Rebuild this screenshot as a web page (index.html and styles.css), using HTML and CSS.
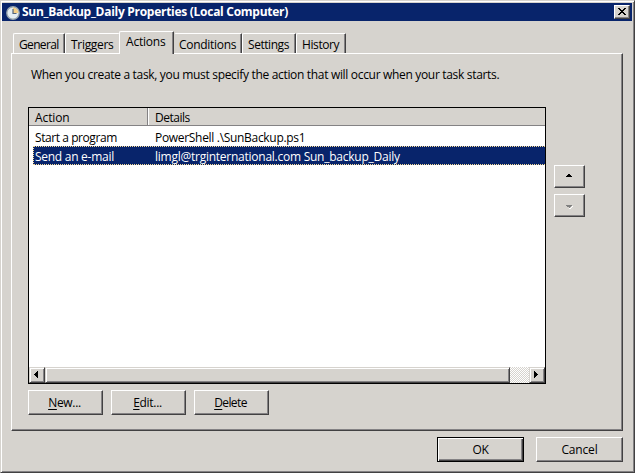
FILE: index.html
```html
<!DOCTYPE html>
<html lang="en">
<head>
<meta charset="utf-8">
<title>Sun_Backup_Daily Properties (Local Computer)</title>
<link rel="stylesheet" href="styles.css">
</head>
<body>
<main class="window">
  <header class="titlebar">
    <svg class="clock" width="14" height="14" viewBox="0 0 14 14">
      <circle cx="7" cy="7" r="6.2" fill="#e4edf2" stroke="#98a4ac" stroke-width="1.4"/>
      <path d="M7 7V1.6A5.4 5.4 0 0 1 12.4 7Z" fill="#f3ce86"/>
      <path d="M7 3v4.5h3.5" fill="none" stroke="#53657c" stroke-width="1.2"/>
    </svg>
    <h1 class="title"><span class="t-title">Sun_Backup_Daily Properties (Local Computer)</span></h1>
    <button class="close" aria-label="Close">
      <svg width="8" height="7" viewBox="0 0 8 7" shape-rendering="crispEdges"><path d="M0 0h2v1h1v1h2V1h1V0h2v1H7v1H6v1H5v1h1v1h1v1h1v1H6V6H5V5H3v1H2v1H0V6h1V5h1V4h1V3H2V2H1V1H0z"/></svg>
    </button>
  </header>
  <nav class="tabs">
    <div class="tab general"><span class="t-general">General</span></div>
    <div class="tab triggers"><span class="t-triggers">Triggers</span></div>
    <div class="tab actions active"><span class="t-actions">Actions</span></div>
    <div class="tab conditions"><span class="t-conditions">Conditions</span></div>
    <div class="tab settings"><span class="t-settings">Settings</span></div>
    <div class="tab history"><span class="t-history">History</span></div>
  </nav>
  <section class="panel">
    <p class="intro"><span class="t-intro">When you create a task, you must specify the action that will occur when your task starts.</span></p>
    <div class="content">
      <div class="list">
        <div class="head">
          <div class="th first"><span class="t-action">Action</span></div>
          <div class="th"><span class="t-details">Details</span></div>
        </div>
        <div class="row">
          <div class="cell first"><span class="t-start">Start a program</span></div>
          <div class="cell"><span class="t-power">PowerShell .\SunBackup.ps1</span></div>
        </div>
        <div class="row selected">
          <div class="cell first"><span class="t-send">Send an e-mail</span></div>
          <div class="cell"><span class="t-mail">limgl@trginternational.com Sun_backup_Daily</span></div>
        </div>
        <div class="space"></div>
        <div class="scrollbar">
          <div class="sb-btn"><svg width="4" height="7" viewBox="0 0 4 7" shape-rendering="crispEdges"><path d="M3 0h1v7H3V6H2V5H1V4H0V3h1V2h1V1h1z"/></svg></div>
          <div class="thumb"></div>
          <div class="track"></div>
          <div class="sb-btn"><svg width="4" height="7" viewBox="0 0 4 7" shape-rendering="crispEdges"><path d="M0 0h1v1h1v1h1v1h1v1H3v1H2v1H1v1H0z"/></svg></div>
        </div>
      </div>
      <div class="order">
        <button class="btn arrow" aria-label="Move up"><svg width="8" height="4" viewBox="0 0 8 4" shape-rendering="crispEdges"><path d="M2 0h2v1h1v1h1v1H0V2h1V1h1z"/></svg></button>
        <button class="btn arrow down" aria-label="Move down"><svg width="8" height="4" viewBox="0 0 8 4" shape-rendering="crispEdges"><path d="M6 1h1v1H6v1H5v1H3V3h2V2h1z" fill="#fff"/><path d="M0 0h6v1H5v1H4v1H3V2H1V1H0z" fill="#808080"/></svg></button>
      </div>
    </div>
    <div class="buttons">
      <button class="btn"><span class="t-new"><u>N</u>ew...</span></button>
      <button class="btn"><span class="t-edit"><u>E</u>dit...</span></button>
      <button class="btn"><span class="t-delete"><u>D</u>elete</span></button>
    </div>
  </section>
  <footer class="footer">
    <button class="btn ok"><span class="t-ok">OK</span></button>
    <button class="btn"><span class="t-cancel">Cancel</span></button>
  </footer>
</main>
</body>
</html>
```
FILE: styles.css
```css
* { box-sizing: border-box; }
body {
  margin: 0;
  background: #d6d3ce;
  color: #000;
  font: 12px/16px "Open Sans", "Noto Sans", sans-serif;
}
svg { display: block; flex: none; }
span { white-space: nowrap; }
button { font: inherit; color: inherit; margin: 0; padding: 0; }
.window {
  width: 635px;
  height: 473px;
  overflow: hidden;
  display: flex;
  flex-direction: column;
  border: 1px solid #424142;
  border-top-color: #d6d3ce;
  border-left-color: #d6d3ce;
  box-shadow: inset 1px 1px #fff, inset -1px -1px #848284;
  padding: 2px 2px 1px 1px;
}
.titlebar {
  height: 18px;
  flex: none;
  display: flex;
  align-items: center;
  background: #08246b;
  color: #fff;
  padding: 0 2px 0 4px;
}
.clock { margin-top: 2px; }
.title { margin: 0 auto 0 2px; font-size: 12px; line-height: 18px; font-weight: 700; }
.close {
  width: 16px;
  height: 14px;
  display: flex;
  padding: 2px 0 0 3px;
  background: #d6d3ce;
  border: 1px solid #424142;
  border-top-color: #fff;
  border-left-color: #fff;
  box-shadow: inset -1px -1px #848284;
}
.tabs {
  height: 32px;
  flex: none;
  display: flex;
  align-items: flex-end;
  padding-left: 11px;
}
.tab {
  height: 20px;
  display: flex;
  align-items: flex-start;
  border: 1px solid #424142;
  border-top-color: #fff;
  border-left-color: #fff;
  border-bottom: 0;
  border-radius: 2px 1px 0 0;
  box-shadow: inset -1px 0 #848284;
  padding: 3px 0 0 5px;
}
.general { width: 52px; }
.triggers { width: 54px; border-right: 0; box-shadow: none; }
.actions { width: 55px; }
.conditions { width: 68px; padding-left: 4px; border-left-color: #d6d3ce; }
.settings { width: 54px; }
.history { width: 50px; }
.active {
  height: 23px;
  margin-bottom: -1px;
  padding: 2px 0 0 6px;
  position: relative;
  background: #d6d3ce;
}
.panel {
  width: 612px;
  height: 378px;
  flex: none;
  margin-left: 9px;
  padding: 13px 0 0 16px;
  border: 1px solid #424142;
  border-top-color: #fff;
  border-left-color: #fff;
  box-shadow: inset -1px -1px #848284;
}
.intro { margin: 0 0 24px; padding-left: 3px; height: 16px; }
.content { display: flex; gap: 8px; height: 277px; }
.list {
  width: 518px;
  display: flex;
  flex-direction: column;
  border: 1px solid #000;
  background: #fff;
}
.head { display: flex; height: 18px; background: #d6d3ce; border-bottom: 1px solid #848284; }
.th { flex: 1; padding-left: 6px; line-height: 20px; }
.th.first { flex: none; width: 120px; border-right: 1px solid #fff; box-shadow: inset -1px 0 #848284; }
.row { height: 19px; margin: 1px 0 0 4px; display: flex; line-height: 21px; }
.cell { padding-left: 6px; }
.cell.first { width: 116px; padding-left: 2px; }
.row.selected {
  margin-top: 0;
  color: #fff;
  background: #08246b;
  border: 1px dotted #f7db94;
  border-right: 0;
  line-height: 19px;
}
.selected .cell.first { width: 115px; padding-left: 1px; }
.space { flex: 1; }
.scrollbar { display: flex; height: 16px; }
.sb-btn, .thumb {
  height: 16px;
  background: #d6d3ce;
  border: 1px solid #424142;
  border-top-color: #d6d3ce;
  border-left-color: #d6d3ce;
  box-shadow: inset 1px 1px #fff, inset -1px -1px #848284;
}
.sb-btn { width: 16px; padding: 3px 0 0 4px; }
.thumb { width: 465px; }
.track { flex: 1; background: repeating-conic-gradient(#fff 0 25%, #d6d3ce 0 50%) 0 0 / 2px 2px; }
.order { display: flex; flex-direction: column; gap: 6px; padding-top: 58px; }
.btn {
  width: 75px;
  height: 25px;
  display: flex;
  align-items: center;
  justify-content: center;
  background: #d6d3ce;
  border: 1px solid #424142;
  border-top-color: #fff;
  border-left-color: #fff;
  box-shadow: inset -1px -1px #848284;
}
.arrow {
  width: 31px;
  height: 23px;
  align-items: flex-start;
  justify-content: flex-start;
  padding: 8px 0 0 11px;
}
.arrow.down { padding-top: 10px; }
.buttons { display: flex; gap: 8px; padding-top: 6px; }
.buttons .btn { padding-right: 2px; }
u { text-underline-offset: 2px; text-decoration-thickness: 1px; }
.footer { display: flex; justify-content: flex-end; gap: 12px; padding: 6px 9px 0 0; }
.footer .btn { width: 87px; }
.footer .ok { border-color: #000; box-shadow: inset 1px 1px #fff, inset -1px -1px #424142, inset -2px -2px #848284; }

/* Text tracking */
.t-title { letter-spacing: -0.28px; }
.t-general { letter-spacing: -0.65px; }
.t-triggers { letter-spacing: -0.3px; }
.t-actions { letter-spacing: -0.2px; }
.t-conditions { letter-spacing: -0.3px; }
.t-settings { letter-spacing: -0.45px; }
.t-history { letter-spacing: -0.4px; }
.t-intro { letter-spacing: -0.32px; }
.t-action { letter-spacing: -0.1px; }
.t-details { letter-spacing: -0.5px; }
.t-start { letter-spacing: -0.43px; }
.t-power { letter-spacing: -0.31px; }
.t-send { letter-spacing: -0.27px; }
.t-mail { letter-spacing: -0.25px; }
.t-new, .t-edit { letter-spacing: -0.3px; }
.t-delete { letter-spacing: -0.6px; }
.t-ok { letter-spacing: -0.3px; }
.t-cancel { letter-spacing: -0.15px; }
```
